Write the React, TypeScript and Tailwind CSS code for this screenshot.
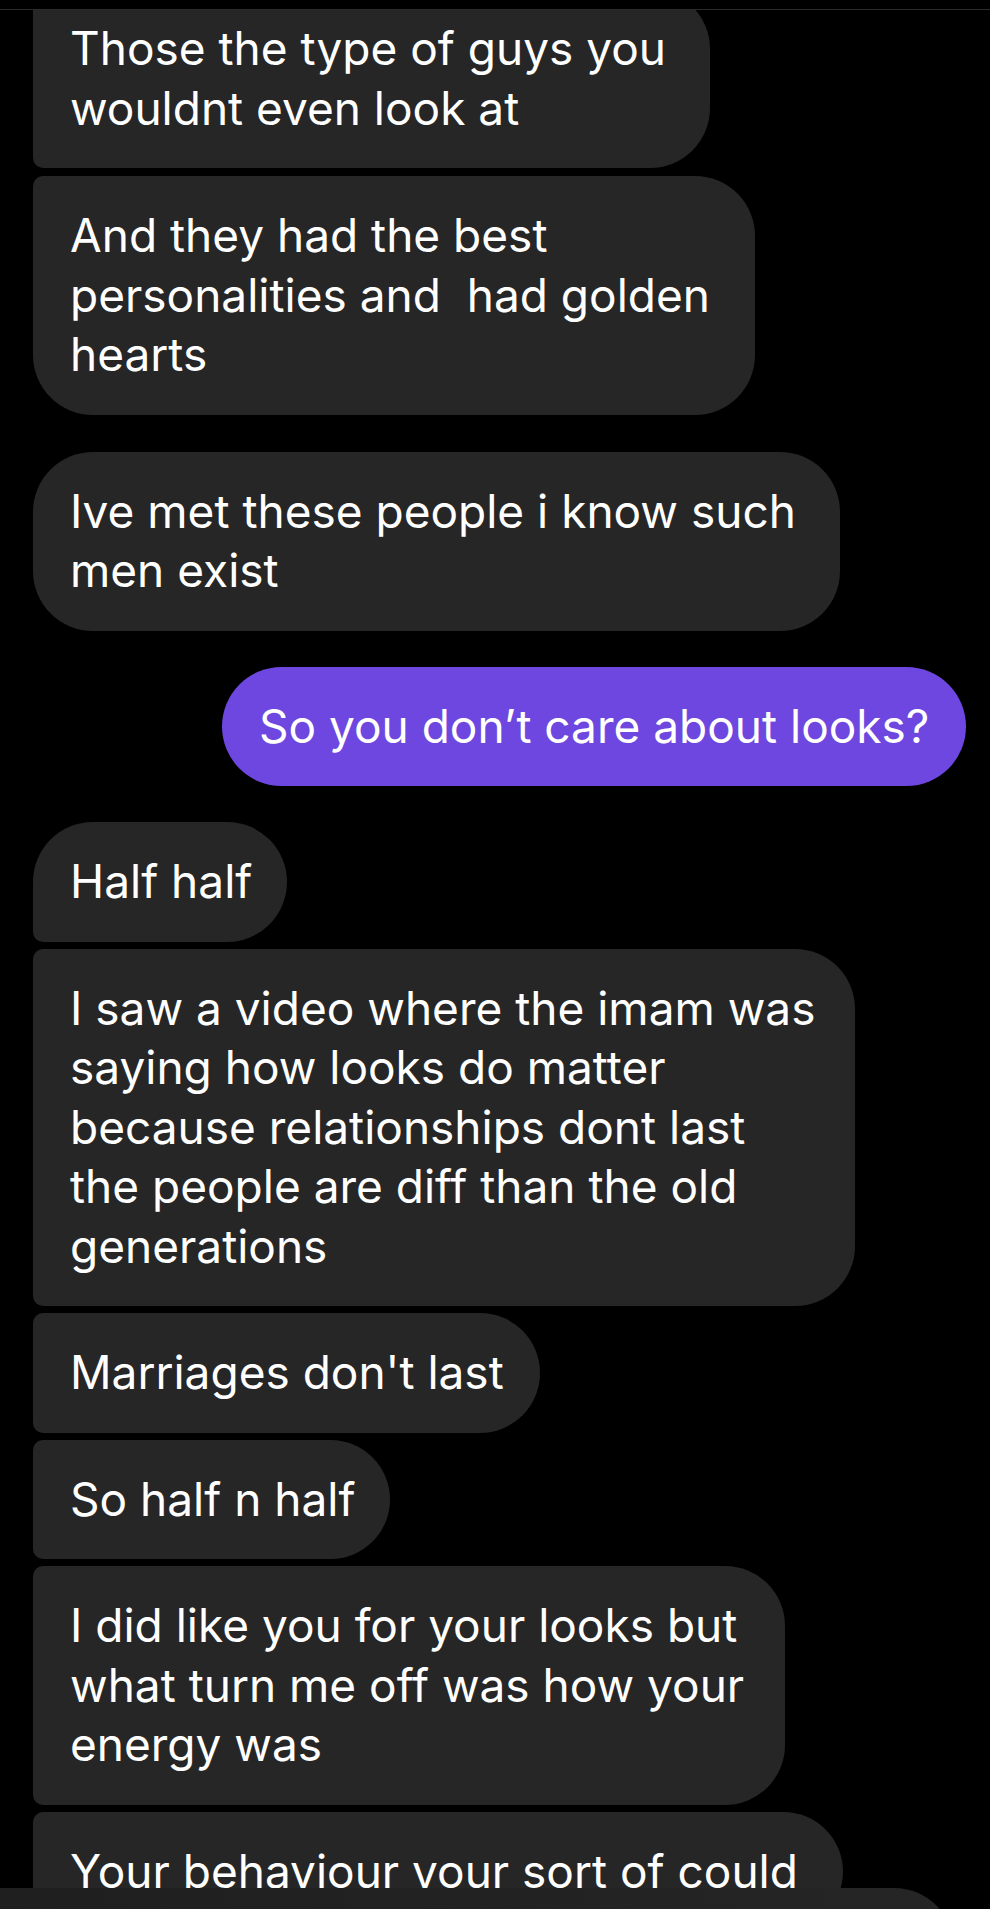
import React from 'react'

type Msg = {
  text: string
  mine?: boolean
  w: string
  mt: string
  corners: string
}

const messages: Msg[] = [
  {
    text: 'Those the type of guys you\nwouldnt even look at',
    w: 'w-[677px]',
    mt: '-mt-[21px]',
    corners: 'rounded-tl-[10px] rounded-bl-[10px] rounded-tr-[60px] rounded-br-[60px]',
  },
  {
    text: 'And they had the best\npersonalities and  had golden\nhearts',
    w: 'w-[722px]',
    mt: 'mt-[8px]',
    corners: 'rounded-tl-[10px] rounded-bl-[60px] rounded-tr-[60px] rounded-br-[60px]',
  },
  {
    text: 'Ive met these people i know such\nmen exist',
    w: 'w-[807px]',
    mt: 'mt-[37px]',
    corners: 'rounded-[60px]',
  },
  {
    text: 'So you don\u2019t care about looks?',
    mine: true,
    w: 'w-[744px]',
    mt: 'mt-[36px]',
    corners: 'rounded-[60px]',
  },
  {
    text: 'Half half',
    w: 'w-[254px]',
    mt: 'mt-[36px]',
    corners: 'rounded-tl-[60px] rounded-bl-[10px] rounded-tr-[60px] rounded-br-[60px]',
  },
  {
    text: 'I saw a video where the imam was\nsaying how looks do matter\nbecause relationships dont last\nthe people are diff than the old\ngenerations',
    w: 'w-[822px]',
    mt: 'mt-[7px]',
    corners: 'rounded-tl-[10px] rounded-bl-[10px] rounded-tr-[60px] rounded-br-[60px]',
  },
  {
    text: "Marriages don't last",
    w: 'w-[507px]',
    mt: 'mt-[7px]',
    corners: 'rounded-tl-[10px] rounded-bl-[10px] rounded-tr-[60px] rounded-br-[60px]',
  },
  {
    text: 'So half n half',
    w: 'w-[357px]',
    mt: 'mt-[7px]',
    corners: 'rounded-tl-[10px] rounded-bl-[10px] rounded-tr-[60px] rounded-br-[60px]',
  },
  {
    text: 'I did like you for your looks but\nwhat turn me off was how your\nenergy was',
    w: 'w-[752px]',
    mt: 'mt-[7px]',
    corners: 'rounded-tl-[10px] rounded-bl-[10px] rounded-tr-[60px] rounded-br-[60px]',
  },
  {
    // runs under the composer bar, as in the screenshot
    text: 'Your behaviour your sort of could',
    w: 'w-[810px]',
    mt: 'mt-[7px]',
    corners: 'rounded-tl-[10px] rounded-bl-[10px] rounded-tr-[60px] rounded-br-[60px]',
  },
]

function Bubble({ m }: { m: Msg }) {
  return (
    <div
      className={`${m.w} ${m.mt} ${m.corners} ${
        m.mine ? 'self-end bg-[#6d47df]' : 'bg-[#262626]'
      } shrink-0 whitespace-pre py-[30px] pl-[37px] text-[46px] leading-[59.5px] text-white`}
    >
      {m.text}
    </div>
  )
}

export default function App() {
  return (
    <div
      className="relative flex h-[1909px] w-[990px] flex-col overflow-hidden bg-black"
      style={{ fontFamily: 'Inter, "Noto Sans", sans-serif' }}
    >
      <div className="h-[9px] shrink-0 bg-black" />
      <div className="flex min-h-0 flex-1 flex-col items-start overflow-hidden border-t border-[#2b2b2b] pl-[33px] pr-[24px]">
        {messages.map((m, i) => (
          <Bubble key={i} m={m} />
        ))}
      </div>

      {/* composer bar peeking in at the bottom */}
      <div className="absolute -bottom-[79px] left-0 h-[100px] w-[954px] rounded-tr-[60px] bg-gradient-to-r from-[#1f1f1f] to-[#252525]" />
    </div>
  )
}
